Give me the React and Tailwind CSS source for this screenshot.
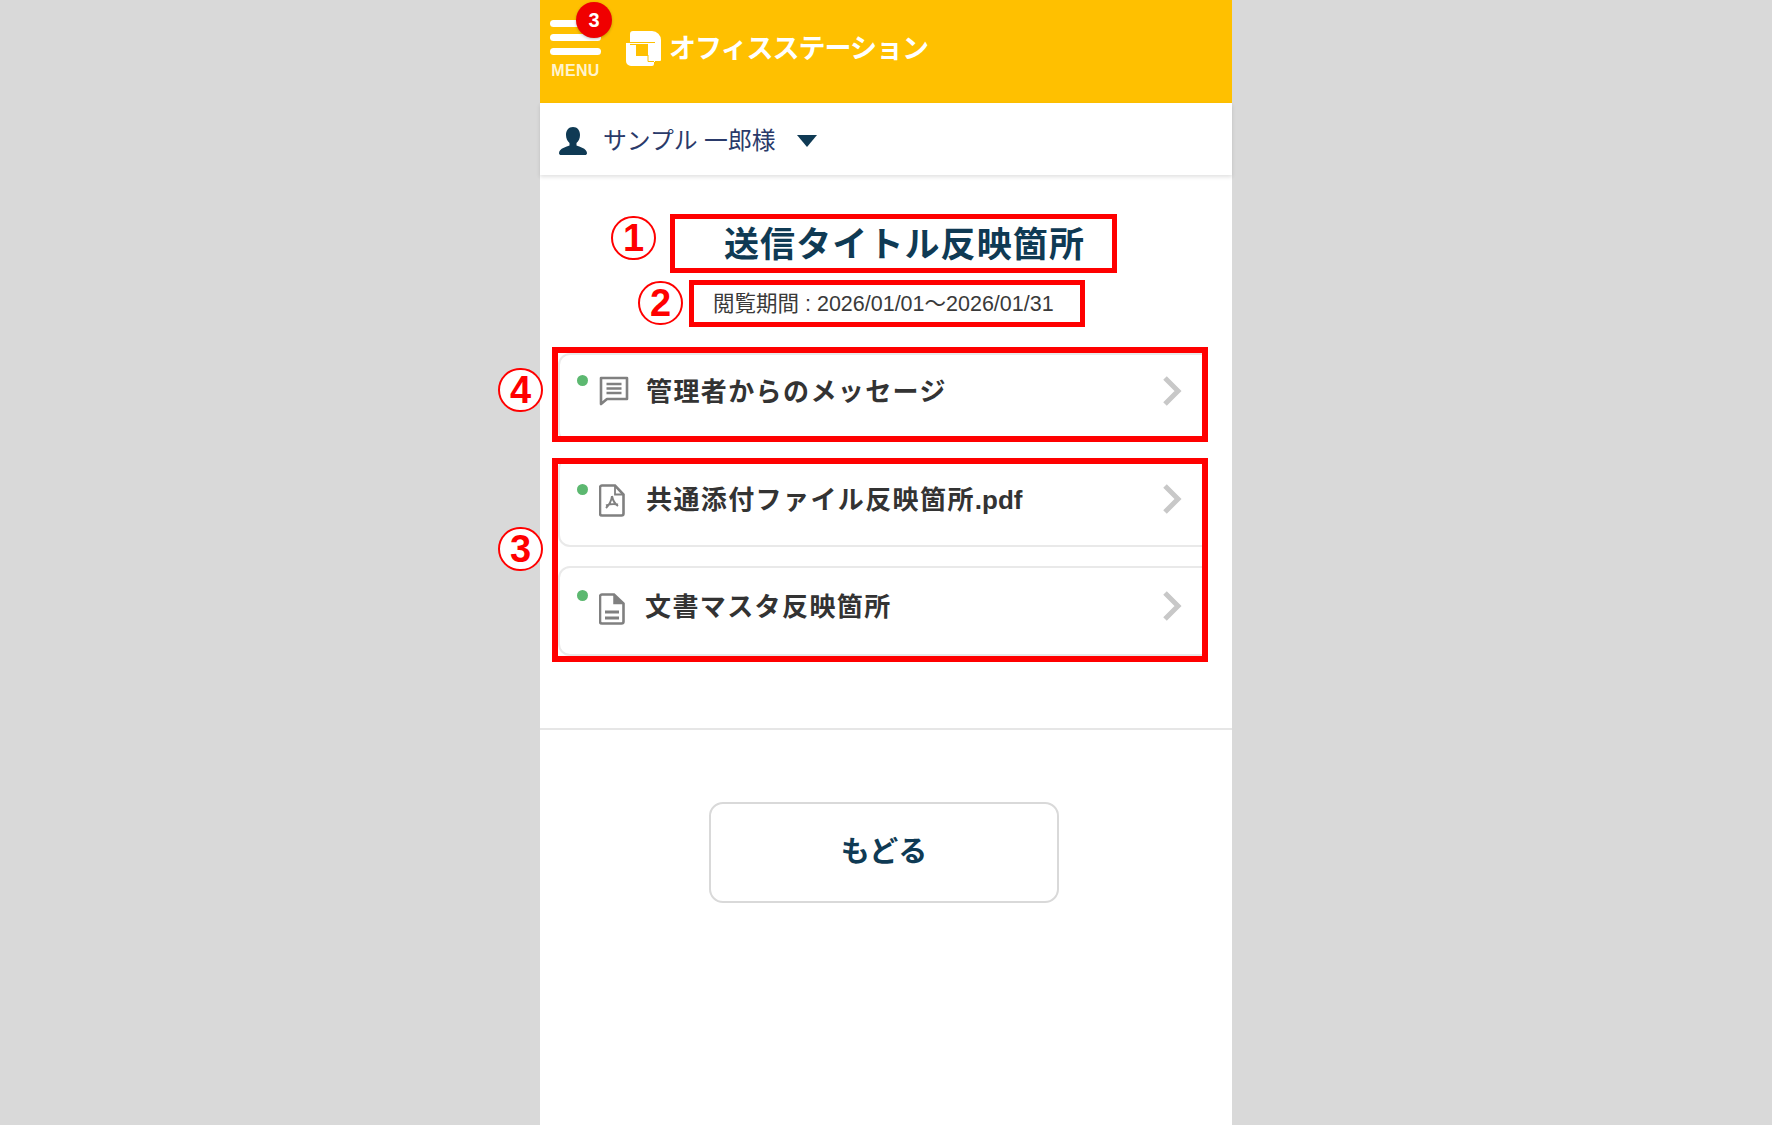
const CJK = { fontFamily: '"Liberation Sans", "Noto Sans CJK JP", sans-serif' };

function CircleNum({ n, className }) {
  return (
    <div className={`absolute flex h-[44px] w-[45px] items-center justify-center rounded-full border-2 border-[#ff0000] bg-white text-[38px] font-bold leading-none text-[#ff0000] ${className}`}>
      {n}
    </div>
  );
}

function Logo() {
  return (
    <svg width="36" height="36" viewBox="0 0 36 36" className="shrink-0">
      <path d="M7 0h19a9 9 0 0 1 9 9v20a1 1 0 0 1-1 1h-5v-19H4V3a3 3 0 0 1 3-3z" fill="#fff" />
      <path d="M0 12h29v19h-1v2a2 2 0 0 1-2 2H5a5 5 0 0 1-5-5z" fill="#fff" />
      <rect x="10" y="13" width="12" height="12" fill="#ffc000" />
      <path d="M4 13.500h6M22 24v6.500h6" fill="none" stroke="#ffc000" strokeWidth="1" />
    </svg>
  );
}

function MsgIcon() {
  return (
    <svg width="30" height="30" viewBox="0 0 30 30" fill="none" stroke="#808080" className="shrink-0">
      <path d="M2 2h26v21H8l-6 5z" strokeWidth="2.6" strokeLinejoin="round" />
      <path d="M7.500 8h15M7.500 12.500h15M7.500 17h15" strokeWidth="2.6" />
    </svg>
  );
}

function PdfIcon() {
  return (
    <svg width="26" height="33" viewBox="0 0 26 33" fill="none" stroke="#808080" className="shrink-0">
      <path d="M3 1.500h13l8.500 9v19a2 2 0 0 1-2 2H3a2 2 0 0 1-2-2v-26a2 2 0 0 1 2-2z" strokeWidth="2.6" />
      <path d="M16 1.500v9h8.500" strokeWidth="1.800" />
      <path d="M13 12c-.5 5-3 9-6 12M13 12c1 5 3 8 6 10M7 21.500c4-1.500 8-2 12-1" strokeWidth="2" />
    </svg>
  );
}

function DocIcon() {
  return (
    <svg width="26" height="32" viewBox="0 0 26 32" fill="none" stroke="#808080" className="shrink-0">
      <path d="M3 1.500h12l9.500 9v18a2 2 0 0 1-2 2H3a2 2 0 0 1-2-2v-25a2 2 0 0 1 2-2z" strokeWidth="2.600" />
      <path d="M15 1.500v9h9.500" fill="#808080" strokeWidth="1.500" />
      <path d="M6 19h14M6 25h14" strokeWidth="2.800" />
    </svg>
  );
}

function Chevron() {
  return (
    <svg width="20" height="32" viewBox="0 0 20 32" fill="none" className="shrink-0">
      <path d="M3 3l13 13L3 29" stroke="#c8c8c8" strokeWidth="5" />
    </svg>
  );
}

function Card({ icon, text, suffix, top, dotTop, iconClass, textClass }) {
  return (
    <div className="flex h-[90px] w-[680px] shrink-0 rounded-xl border-2 border-[#e9e9e9] bg-white">
      <div className={`relative flex w-full items-start pl-[39px] ${top}`}>
        <span className={`absolute left-[17px] h-[11px] w-[11px] rounded-full bg-[#5cb870] ${dotTop}`} />
        <div className={`w-[46px] ${iconClass}`}>{icon}</div>
        <span className={`whitespace-nowrap text-[26px] font-bold leading-[34px] tracking-[1.4px] text-[#333333] ${textClass}`}>
          {text}
          {suffix && <span className="tracking-normal">{suffix}</span>}
        </span>
        <span className="absolute left-[602px]">
          <Chevron />
        </span>
      </div>
    </div>
  );
}

export default function App() {
  return (
    <div className="flex min-h-[1125px] justify-center bg-[#d9d9d9]" style={CJK}>
      <div className="w-[692px] bg-white">
        <header className="flex h-[103px] items-start bg-[#ffc000] pl-[10px]">
          <div className="relative mt-[20px] w-[51px]">
            <div className="flex flex-col gap-[7px]">
              <div className="h-[7px] rounded-full bg-white" />
              <div className="h-[7px] rounded-full bg-white" />
              <div className="h-[7px] rounded-full bg-white" />
            </div>
            <div className="mt-[8px] text-center text-[16px] font-bold leading-[16px] tracking-[0.3px] text-[#fff4cf]">MENU</div>
            <div className="absolute left-[26px] top-[-18px] flex h-[36px] w-[36px] items-center justify-center rounded-full bg-[#f00000] text-[20px] font-bold text-white shadow-[0_1px_3px_rgba(0,0,0,0.25)]">
              3
            </div>
          </div>
          <div className="ml-[25px] mt-[31px] flex items-center gap-[7px]">
            <Logo />
            <span className="whitespace-nowrap text-[27px] font-bold leading-[36px] tracking-[-1px] text-white">オフィスステーション</span>
          </div>
        </header>

        <div className="flex h-[72px] items-center pl-[18px] pt-[3px] shadow-[0_2px_4px_rgba(0,0,0,0.12)]">
          <svg width="30" height="30" viewBox="0 0 30 30" fill="#0f3a54" className="shrink-0">
            <path d="M15 1c4.500 0 7 3.500 7 8 0 3.500-1.500 6.500-3.500 8v2.500c3 1.500 10 2.500 10.500 7.500 0 1.500-1 2-2 2H3c-1 0-2-.5-2-2C1.500 22 8.500 21 11.500 19.500V17C9.500 15.500 8 12.500 8 9c0-4.500 2.500-8 7-8z" />
          </svg>
          <span className="ml-[15px] whitespace-nowrap text-[23.8px] leading-[32px] text-[#2a3a6a]">サンプル 一郎様</span>
          <span className="ml-[22px] h-0 w-0 border-x-[10px] border-t-[12px] border-x-transparent border-t-[#0f3a54]" />
        </div>

        <main>
          <div className="relative ml-[130px] mt-[39px] flex h-[59px] w-[447px] items-center border-[5px] border-[#ff0000] pl-[49px] pt-[2px]">
            <CircleNum n="1" className="left-[-64px] top-[-3px]" />
            <h1 className="whitespace-nowrap text-[35px] font-bold leading-[44px] tracking-[1.1px] text-[#0f3a54]">送信タイトル反映箇所</h1>
          </div>

          <div className="relative ml-[149px] mt-[7px] flex h-[47px] w-[396px] items-center border-[5px] border-[#ff0000] pl-[19px]">
            <CircleNum n="2" className="left-[-56px] top-[-4px]" />
            <span className="whitespace-nowrap text-[21.5px] leading-[28px] text-[#3a3a3a]">閲覧期間 : 2026/01/01～2026/01/31</span>
          </div>

          <div className="relative ml-[12px] mt-[20px] h-[95px] w-[656px] border-[6px] border-[#ff0000]">
            <CircleNum n="4" className="left-[-60px] top-[15px]" />
            <div className="h-full overflow-hidden">
              <Card icon={<MsgIcon />} text="管理者からのメッセージ" top="pt-[20px]" dotTop="top-[20px]" iconClass="pt-[1px]" textClass="ml-[1px]" />
            </div>
          </div>

          <div className="relative ml-[12px] mt-[16px] h-[204px] w-[656px] border-[6px] border-[#ff0000]">
            <CircleNum n="3" className="left-[-60px] top-[63px]" />
            <div className="h-full overflow-hidden">
              <div className="-mt-[7px] flex flex-col gap-[19px]">
                <Card icon={<PdfIcon />} text="共通添付ファイル反映箇所" suffix=".pdf" top="pt-[24px]" dotTop="top-[25px]" iconClass="pt-[1px]" textClass="ml-[1px]" />
                <Card icon={<DocIcon />} text="文書マスタ反映箇所" top="pt-[22px]" dotTop="top-[22px]" iconClass="pt-[3px]" textClass="" />
              </div>
            </div>
          </div>

          <div className="mt-[66px] h-[2px] bg-[#e6e6e6]" />

          <button className="ml-[169px] mt-[72px] flex h-[101px] w-[350px] items-center justify-center rounded-[14px] border-2 border-[#d9d9d9] bg-white text-[29px] font-bold text-[#0f3a54]">
            もどる
          </button>
        </main>
      </div>
    </div>
  );
}
